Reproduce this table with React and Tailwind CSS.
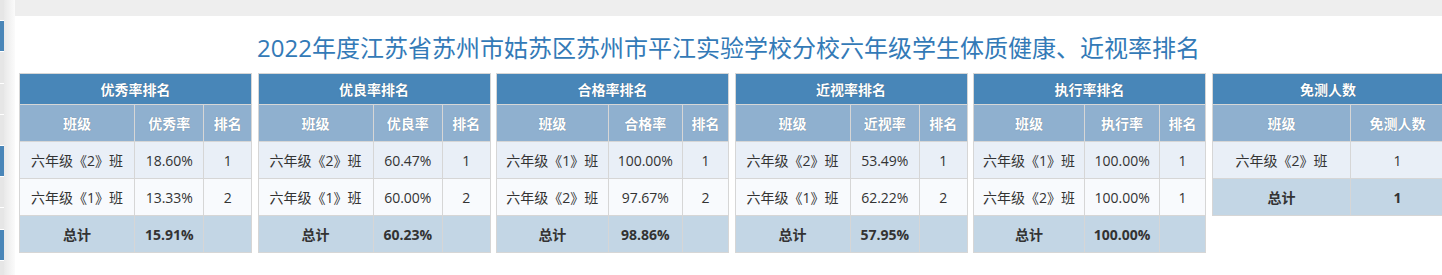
import React from 'react';

const tables = [
  {
    title: '优秀率排名',
    cols: ['班级', '优秀率', '排名'],
    rows: [
      ['六年级《2》班', '18.60%', '1'],
      ['六年级《1》班', '13.33%', '2'],
    ],
    total: ['总计', '15.91%', ''],
  },
  {
    title: '优良率排名',
    cols: ['班级', '优良率', '排名'],
    rows: [
      ['六年级《2》班', '60.47%', '1'],
      ['六年级《1》班', '60.00%', '2'],
    ],
    total: ['总计', '60.23%', ''],
  },
  {
    title: '合格率排名',
    cols: ['班级', '合格率', '排名'],
    rows: [
      ['六年级《1》班', '100.00%', '1'],
      ['六年级《2》班', '97.67%', '2'],
    ],
    total: ['总计', '98.86%', ''],
  },
  {
    title: '近视率排名',
    cols: ['班级', '近视率', '排名'],
    rows: [
      ['六年级《2》班', '53.49%', '1'],
      ['六年级《1》班', '62.22%', '2'],
    ],
    total: ['总计', '57.95%', ''],
  },
  {
    title: '执行率排名',
    cols: ['班级', '执行率', '排名'],
    rows: [
      ['六年级《1》班', '100.00%', '1'],
      ['六年级《2》班', '100.00%', '1'],
    ],
    total: ['总计', '100.00%', ''],
  },
  {
    title: '免测人数',
    cols: ['班级', '免测人数'],
    rows: [['六年级《2》班', '1']],
    total: ['总计', '1'],
  },
];

const rowBg = ['bg-[#e9eff7]', 'bg-[#f8fafd]'];

function RankTable({ t }) {
  return (
    <table className="w-[233px] shrink-0 border-collapse self-start text-[14px] text-[#333]">
      <thead>
        <tr className="h-[31px] bg-[#4886b8]">
          <th
            colSpan={t.cols.length}
            className="border border-[#d6d6d6] font-bold text-white [text-shadow:0_0_1px_rgba(0,0,0,0.35)]"
          >
            {t.title}
          </th>
        </tr>
        <tr className="h-[37px] bg-[#8fb0cf]">
          {t.cols.map((c) => (
            <th key={c} className="border border-[#d6d6d6] px-2 font-bold text-white [text-shadow:0_0_1px_rgba(0,0,0,0.3)]">
              {c}
            </th>
          ))}
        </tr>
      </thead>
      <tbody>
        {t.rows.map((r, i) => (
          <tr key={i} className={`h-[37px] ${rowBg[i % 2]}`}>
            {r.map((v, j) => (
              <td key={j} className="border border-[#d6d6d6] px-2 text-center whitespace-nowrap">
                {v}
              </td>
            ))}
          </tr>
        ))}
        <tr className="h-[37px] bg-[#c3d6e5] font-bold">
          {t.total.map((v, j) => (
            <td key={j} className="border border-[#d6d6d6] px-2 text-center whitespace-nowrap">
              {v}
            </td>
          ))}
        </tr>
      </tbody>
    </table>
  );
}

function SideStrip() {
  const segs = [
    ['h-[20px]', 'bg-[#e6e6e6]'],
    ['h-[30px]', 'bg-[#4a86b8]'],
    ['h-[31px]', 'bg-[#e6e6e6]'],
    ['h-[30px]', 'bg-[#e6e6e6]'],
    ['h-[30px]', 'bg-[#e6e6e6]'],
    ['h-[30px]', 'bg-[#4a86b8]'],
    ['h-[30px]', 'bg-[#e6e6e6]'],
    ['h-[21px]', 'bg-[#e6e6e6]'],
    ['h-[30px]', 'bg-[#4a86b8]'],
    ['h-[20px]', 'bg-[#e6e6e6]'],
  ];
  return (
    <div className="flex w-[4px] shrink-0 flex-col gap-px bg-white">
      {segs.map(([h, bg], i) => (
        <div key={i} className={`${h} ${bg} shrink-0`} />
      ))}
    </div>
  );
}

export default function App() {
  return (
    <div
      className="flex h-[275px] w-full overflow-hidden bg-white"
      style={{ fontFamily: '"Open Sans", "Noto Sans CJK SC", sans-serif' }}
    >
      <SideStrip />
      <div className="w-[11px] shrink-0 bg-gradient-to-r from-[#e9e9e9] to-[#fbfbfb]" />
      <div className="flex min-w-0 flex-1 flex-col">
        <div className="h-[16px] bg-[#eeeeee]" />
        <h1 className="mt-[16px] h-[32px] text-center text-[24px] leading-[32px] font-normal text-[#337ab7]">
          2022年度江苏省苏州市姑苏区苏州市平江实验学校分校六年级学生体质健康、近视率排名
        </h1>
        <div className="mt-[9px] flex gap-[5.5px] pl-[4px]">
          {tables.map((t) => (
            <RankTable key={t.title} t={t} />
          ))}
        </div>
      </div>
    </div>
  );
}
